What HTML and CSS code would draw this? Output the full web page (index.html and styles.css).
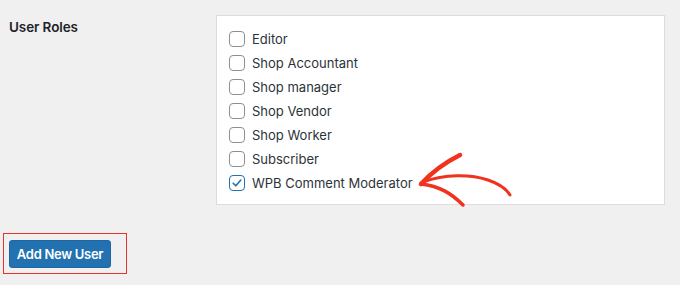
FILE: index.html
```html
<!DOCTYPE html>
<html lang="en">
<head>
  <meta charset="UTF-8" />
  <title>Add New User</title>
  <link rel="stylesheet" href="styles.css">
</head>
<body>

  <div class="form-row">
    <div class="form-label">User Roles</div>
    <div class="roles-box">
      <label class="role"><span class="check"></span>Editor</label>
      <label class="role"><span class="check"></span>Shop Accountant</label>
      <label class="role"><span class="check"></span>Shop manager</label>
      <label class="role"><span class="check"></span>Shop Vendor</label>
      <label class="role"><span class="check"></span>Shop Worker</label>
      <label class="role"><span class="check"></span>Subscriber</label>
      <label class="role"><span class="check checked">
        <svg width="12" height="12" viewBox="0 0 12 12"><path d="M2.2 6.2 L4.8 8.8 L9.8 3" fill="none" stroke="#2271b1" stroke-width="1.6" stroke-linecap="round" stroke-linejoin="round"/></svg>
      </span>WPB Comment Moderator</label>
    </div>
  </div>

  <div class="submit-row">
    <div class="highlight">
      <button class="button-primary">Add New User</button>
    </div>
  </div>

  <!-- hand drawn arrow pointing at the checked role -->
  <svg class="arrow" width="680" height="285" viewBox="0 0 680 285">
    <g fill="none" stroke="#f0321e" stroke-linecap="round" stroke-linejoin="round">
      <path d="M421 184 C 432 172, 446 162, 460 155" stroke-width="4.5"/>
      <path d="M421 184 C 440 186, 452 194, 463 205" stroke-width="3.5"/>
      <path d="M423 182 C 445 174, 470 174, 488 180 C 500 184, 507 190, 510 195" stroke-width="3"/>
    </g>
  </svg>

</body>
</html>
```

FILE: styles.css
```css
body {
  margin: 0;
  background-color: #f0f0f1;
  color: #1d2327;
  font-family: "Inter", "Noto Sans", sans-serif;
  font-size: 13px;
  width: 680px;
  height: 285px;
  overflow: hidden;
  position: relative;
}

.form-row {
  display: flex;
  padding-top: 15px;
}

.form-label {
  width: 207px;
  padding-left: 9px;
  padding-top: 4px;
  font-weight: 600;
  font-size: 13.5px;
  line-height: 17px;
  letter-spacing: -0.1px;
}

.roles-box {
  box-sizing: border-box;
  width: 449px;
  height: 190px;
  background: #ffffff;
  border: 1px solid #dcdcde;
  padding: 11px 0 9px 12px;
  display: flex;
  flex-direction: column;
}

.role {
  display: flex;
  align-items: center;
  gap: 7px;
  height: 24px;
  font-size: 13px;
  color: #2c3338;
}

.check {
  width: 16px;
  height: 16px;
  box-sizing: border-box;
  border: 1px solid #8c8f94;
  border-radius: 4px;
  background: #fff;
  display: flex;
  align-items: center;
  justify-content: center;
}

.check.checked {
  border: 1.5px solid #2271b1;
}

.submit-row {
  padding: 28px 0 0 3px;
}

.highlight {
  display: inline-block;
  border: 1.5px solid #e8322a;
  padding: 5.5px 15px 5.5px 5px;
}

.button-primary {
  display: block;
  height: 28px;
  width: 102px;
  padding: 0;
  background: #2271b1;
  border: 1px solid #1f65a0;
  border-radius: 3px;
  color: #ffffff;
  font-family: "Inter", "Noto Sans", sans-serif;
  font-size: 13px;
  font-weight: 600;
  letter-spacing: -0.3px;
}

.arrow {
  position: absolute;
  left: 0;
  top: 0;
}
```
